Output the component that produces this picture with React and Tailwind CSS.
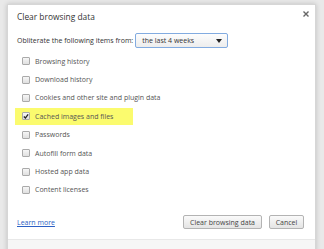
export default function App() {
  const items = [
    ["Browsing history", false],
    ["Download history", false],
    ["Cookies and other site and plugin data", false],
    ["Cached images and files", true],
    ["Passwords", false],
    ["Autofill form data", false],
    ["Hosted app data", false],
    ["Content licenses", false],
  ];

  return (
    <div
      className="w-[324px] h-[249px] overflow-hidden bg-[#e9e9e9] pt-[4px] pl-[7px] text-[#333]"
      style={{ fontFamily: '"Open Sans", "Liberation Sans", sans-serif' }}
    >
      <div className="w-[309px] h-[260px] bg-white border border-[#d6d6d6] shadow-[0_0_5px_rgba(0,0,0,0.18)] flex flex-col">
        <div className="flex justify-between items-center h-[12px] mt-[6px] pl-[9px] pr-[6px]">
          <span className="text-[8.4px] leading-none text-[#333]">Clear browsing data</span>
          <svg width="6" height="6" viewBox="0 0 6 6" className="-mt-[7px]">
            <path d="M0.5 0.5L5.5 5.5M5.5 0.5L0.5 5.5" stroke="#666" strokeWidth="1.4" />
          </svg>
        </div>

        <div className="flex items-center h-[15px] pl-[9px] mt-[10px] gap-[2px]">
          <span className="text-[7px] leading-none text-[#333]">Obliterate the following items from:</span>
          <div className="w-[93px] h-[15px] border border-[#82abe0] rounded-[2px] bg-gradient-to-b from-[#fdfdfd] to-[#ededed] flex items-center justify-between pl-[6px] pr-[5px]">
            <span className="text-[7px] leading-none text-[#333]">the last 4 weeks</span>
            <svg width="6" height="4" viewBox="0 0 6 4">
              <path d="M0 0H6L3 4Z" fill="#222" />
            </svg>
          </div>
        </div>

        <div className="flex flex-col mt-[4px] pl-[7px]">
          {items.map(([label, checked]) => (
            <div key={label} className="h-[18.4px] flex items-center">
              <div
                className={
                  "flex items-center h-[17px] gap-[5px] pl-[7px] " +
                  (checked ? "bg-[#fbfb6e] w-[118px]" : "")
                }
              >
                <div className="w-[8px] h-[8px] border border-[#aaaaaa] rounded-[1px] bg-gradient-to-b from-[#f6f6f6] to-[#e0e0e0] flex items-center justify-center">
                  {checked && (
                    <svg width="7" height="7" viewBox="0 0 7 7">
                      <path d="M1 3.5L2.8 5.3L6 1" stroke="#222" strokeWidth="1.6" fill="none" />
                    </svg>
                  )}
                </div>
                <span className="text-[7px] leading-none text-[#555]">{label}</span>
              </div>
            </div>
          ))}
        </div>

        <div className="flex items-center justify-between h-[14px] pl-[9px] pr-[11px] mt-[16px]">
          <span className="text-[7px] leading-none text-[#2b5fc4] underline">Learn more</span>
          <div className="flex gap-[7px]">
            <button className="w-[79px] h-[14px] text-[7px] border border-[#b3b3b3] rounded-[2px] bg-gradient-to-b from-[#fafafa] to-[#e4e4e4] text-[#444] leading-none">
              Clear browsing data
            </button>
            <button className="w-[35px] h-[14px] text-[7px] border border-[#b3b3b3] rounded-[2px] bg-gradient-to-b from-[#fafafa] to-[#e4e4e4] text-[#444] leading-none">
              Cancel
            </button>
          </div>
        </div>

        <div className="mt-[10px] flex-1 bg-[#f6f6f6] border-t border-[#e8e8e8]" />
      </div>
    </div>
  );
}
